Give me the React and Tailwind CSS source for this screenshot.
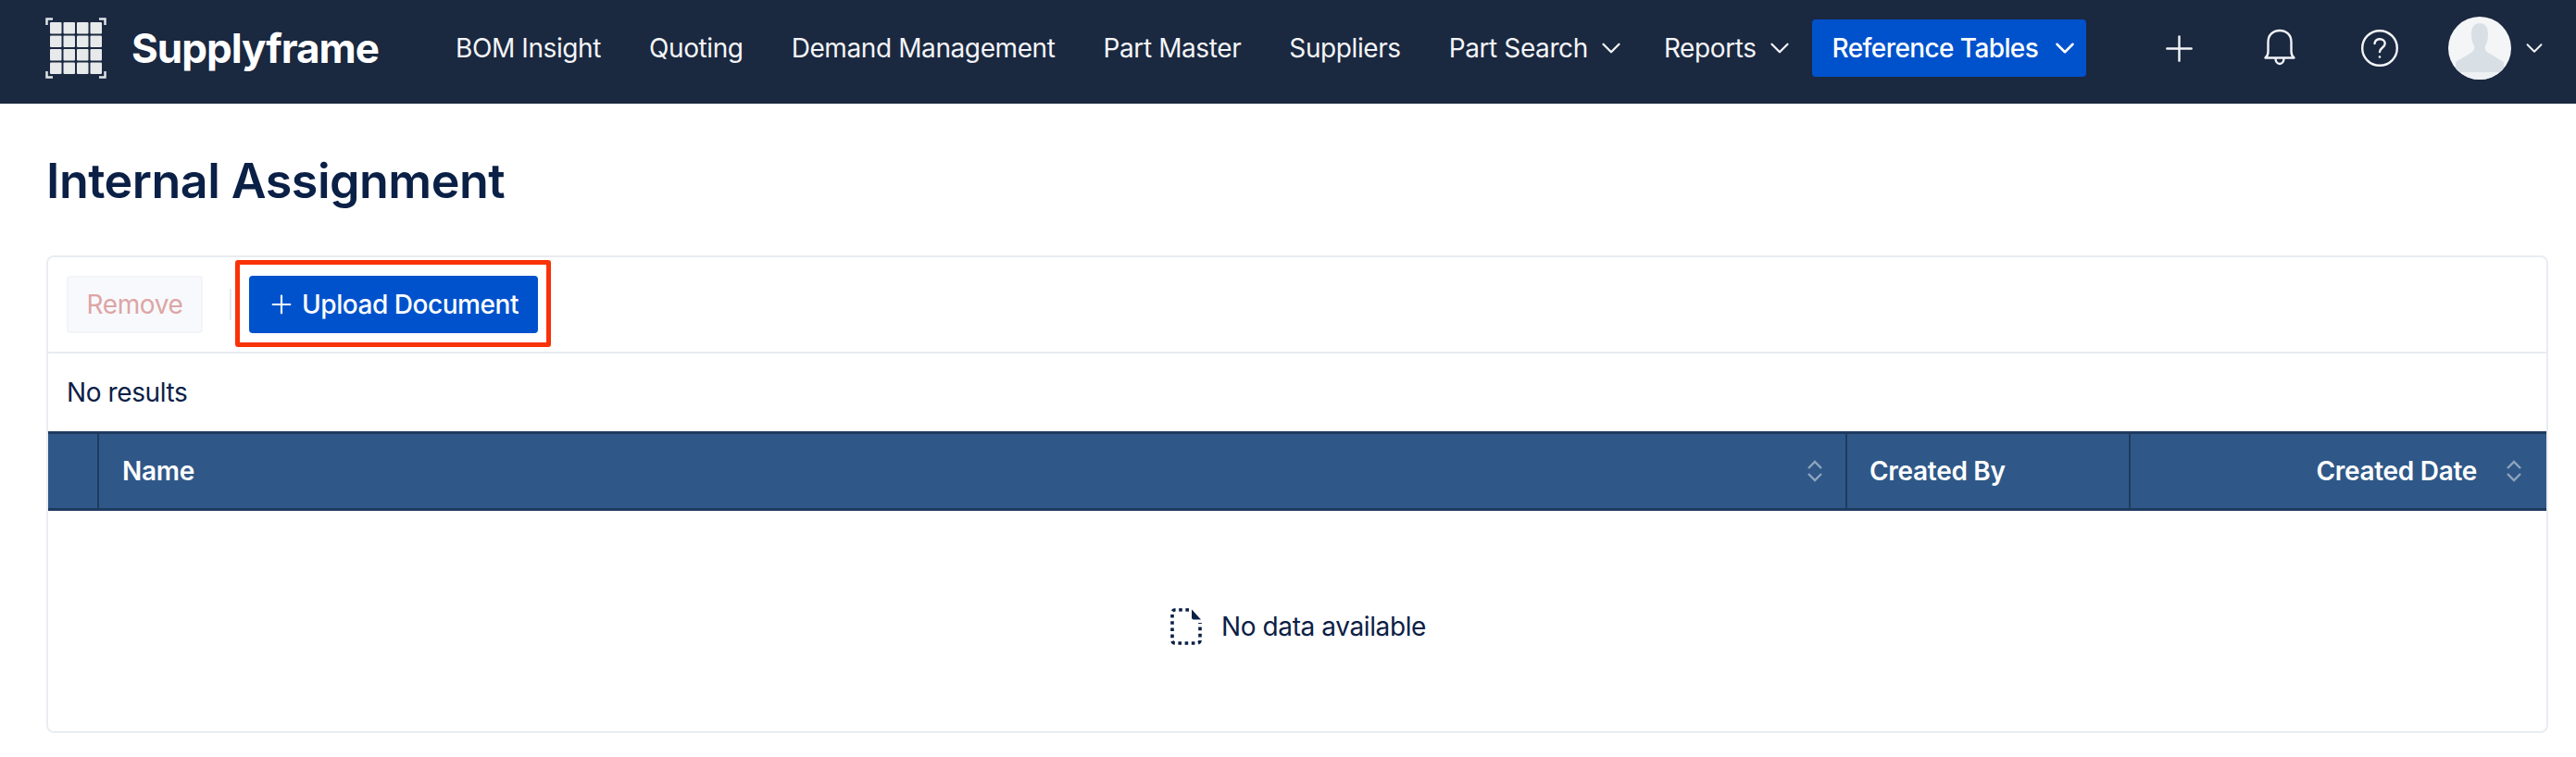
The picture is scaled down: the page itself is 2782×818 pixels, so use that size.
import React from "react";
import { Plus, ChevronDown } from "lucide-react";

const Logo = () => (
  <svg width="66" height="66" viewBox="0 0 66 66" className="shrink-0">
    {[0, 1, 2, 3].flatMap((r) =>
      [0, 1, 2, 3].map((c) => (
        <rect key={`${r}-${c}`} x={5 + c * 14.5} y={5 + r * 14.5} width="12.5" height="12.5" rx="1" fill="#e8e9ea" />
      ))
    )}
    <path d="M1.5 8V1.5H8M58 1.5h6.5V8M1.5 58v6.5H8M58 64.5h6.5V58" fill="none" stroke="#dfe3e8" strokeWidth="2.5" />
  </svg>
);

const Bell = () => (
  <svg width="36" height="42" viewBox="0 0 36 42" fill="none" stroke="#f2f4f7" strokeWidth="2.4" strokeLinejoin="round">
    <path d="M2.5 31.5c2-1.5 3-3.5 3-7V14.5C5.500 7 10.500 2 18 2s12.500 5 12.500 12.500V24.500c0 3.500 1 5.500 3 7z" />
    <path d="M13.500 32c0 3.500 2 6 4.500 6s4.500-2.500 4.500-6" />
  </svg>
);

const Help = () => (
  <svg width="42" height="42" viewBox="0 0 42 42" fill="none" stroke="#f2f4f7" strokeWidth="2.4" strokeLinecap="round">
    <circle cx="21" cy="21" r="18.800" />
    <path d="M15.500 16c.5-3 2.700-4.700 5.700-4.700 3.200 0 5.500 2 5.500 4.800 0 4.400-5.700 4.400-5.700 9" />
    <circle cx="21" cy="30.500" r="1.300" fill="#f2f4f7" stroke="none" />
  </svg>
);

const Avatar = () => (
  <svg width="68" height="68" viewBox="0 0 68 68" className="shrink-0">
    <clipPath id="av">
      <circle cx="34" cy="34" r="34" />
    </clipPath>
    <g clipPath="url(#av)">
      <rect width="68" height="68" fill="#f3f5f7" />
      <path d="M34 7c-6.500 0-9 5-9 12 0 6 1.500 10 3 13 1 3-1 6-5 8l-15 9v11h52V49l-15-9c-4-2-6-5-5-8 1.500-3 3-7 3-13 0-7-2.500-12-9-12z" fill="#d9e0e5" />
      <rect y="60" width="68" height="8" fill="#eef1f3" />
    </g>
  </svg>
);

const NoData = () => (
  <svg width="34" height="40" viewBox="0 0 34 40" fill="none" className="shrink-0">
    <path
      d="M20 2H5a3 3 0 0 0-3 3v30a3 3 0 0 0 3 3h24a3 3 0 0 0 3-3V16"
      stroke="#0b2046"
      strokeWidth="3.600"
      strokeDasharray="3.600 3.600"
    />
    <path d="M23 1.500 33 12.500H25a2 2 0 0 1-2-2z" fill="#0b2046" />
  </svg>
);

const NavItem = ({ label, caret }) => (
  <div className="flex items-center gap-[8px] text-[28px] tracking-[-0.4px] text-[#f4f5f7] whitespace-nowrap">
    <span>{label}</span>
    {caret && <ChevronDown size={34} strokeWidth={1.600} />}
  </div>
);

const SortIcon = () => (
  <svg width="18" height="24" viewBox="0 0 18 24" fill="none" stroke="#8fa4bd" strokeWidth="2.400" className="shrink-0">
    <path d="M2 9l7-7 7 7M2 15l7 7 7-7" />
  </svg>
);

export default function App() {
  return (
    <div className="w-[2782px] h-[818px] overflow-hidden bg-white font-['Inter',sans-serif] text-[#0b2046]">
      <header className="h-[112px] bg-[#1a2840] flex items-center pl-[49px] pb-[8px]">
        <Logo />
        <span className="ml-[27px] w-[350px] text-[44px] font-bold tracking-[-1px] text-white">Supplyframe</span>
        <nav className="flex items-center gap-[52px]">
          <NavItem label="BOM Insight" />
          <NavItem label="Quoting" />
          <NavItem label="Demand Management" />
          <NavItem label="Part Master" />
          <NavItem label="Suppliers" />
          <NavItem label="Part Search" caret />
        </nav>
        <div className="ml-[40px]">
          <NavItem label="Reports" caret />
        </div>
        <button className="ml-[18px] h-[62px] w-[296px] bg-[#0052cc] rounded-[4px] flex items-center pl-[22px] gap-[12px] text-[28px] font-medium tracking-[-0.6px] text-white whitespace-nowrap">
          Reference Tables
          <ChevronDown size={34} strokeWidth={1.800} />
        </button>
        <Plus size={45} strokeWidth={1.300} className="ml-[78px] text-[#f2f4f7]" />
        <div className="ml-[68px] flex"><Bell /></div>
        <div className="ml-[69px] flex"><Help /></div>
        <div className="ml-[53px] flex items-center gap-[10px]">
          <Avatar />
          <ChevronDown size={30} strokeWidth={1.500} className="text-[#f2f4f7]" />
        </div>
      </header>

      <main className="px-[50px] pt-[52px]">
        <h1 className="text-[52px] leading-[64px] font-semibold tracking-[-0.5px] text-[#0b2046]">Internal Assignment</h1>

        <section className="mt-[48px] border-2 border-[#e9ecf1] rounded-[8px] h-[516px] w-[2702px]">
          <div className="relative h-[104px] border-b-2 border-[#e9ecf1] flex items-center pl-[20px]">
            <button className="w-[147px] h-[62px] rounded-[4px] border-2 border-[#f3f4f8] bg-[#f8f9fc] text-[28px] tracking-[-0.4px] text-[#dda5a5]">
              Remove
            </button>
            <div className="ml-[29px] w-[2px] h-[34px] bg-[#e6e8ed]" />
            <button className="ml-[19px] w-[312px] h-[62px] rounded-[4px] bg-[#0052cc] text-white text-[28px] font-medium tracking-[-0.45px] flex items-center pl-[19px] gap-[6px]">
              <Plus size={32} strokeWidth={1.600} />
              Upload Document
            </button>
            <div className="absolute left-[202px] top-[3px] w-[341px] h-[94px] border-[5px] border-[#f93208] rounded-[3px]" />
          </div>
          <div className="h-[84px] flex items-center pl-[20px] text-[28px] tracking-[-0.4px]">No results</div>
          <div className="h-[86px] flex bg-[#2f5888] border-y-[3px] border-[#1f3a5f] text-white text-[28px] font-semibold tracking-[-0.3px]">
            <div className="w-[55px] border-r-2 border-[#1f3a5f]" />
            <div className="flex-1 flex items-center justify-between pl-[25px] pr-[24px] border-r-2 border-[#1f3a5f]">
              Name
              <SortIcon />
            </div>
            <div className="w-[306px] flex items-center pl-[24px] border-r-2 border-[#1f3a5f]">Created By</div>
            <div className="w-[449px] flex items-center justify-end gap-[31px] pr-[26px]">
              Created Date
              <SortIcon />
            </div>
          </div>
          <div className="h-[236px] flex items-center justify-center gap-[21px] text-[28px] tracking-[-0.4px] pt-[14px] pl-[2px]">
            <NoData />
            No data available
          </div>
        </section>
      </main>
    </div>
  );
}
